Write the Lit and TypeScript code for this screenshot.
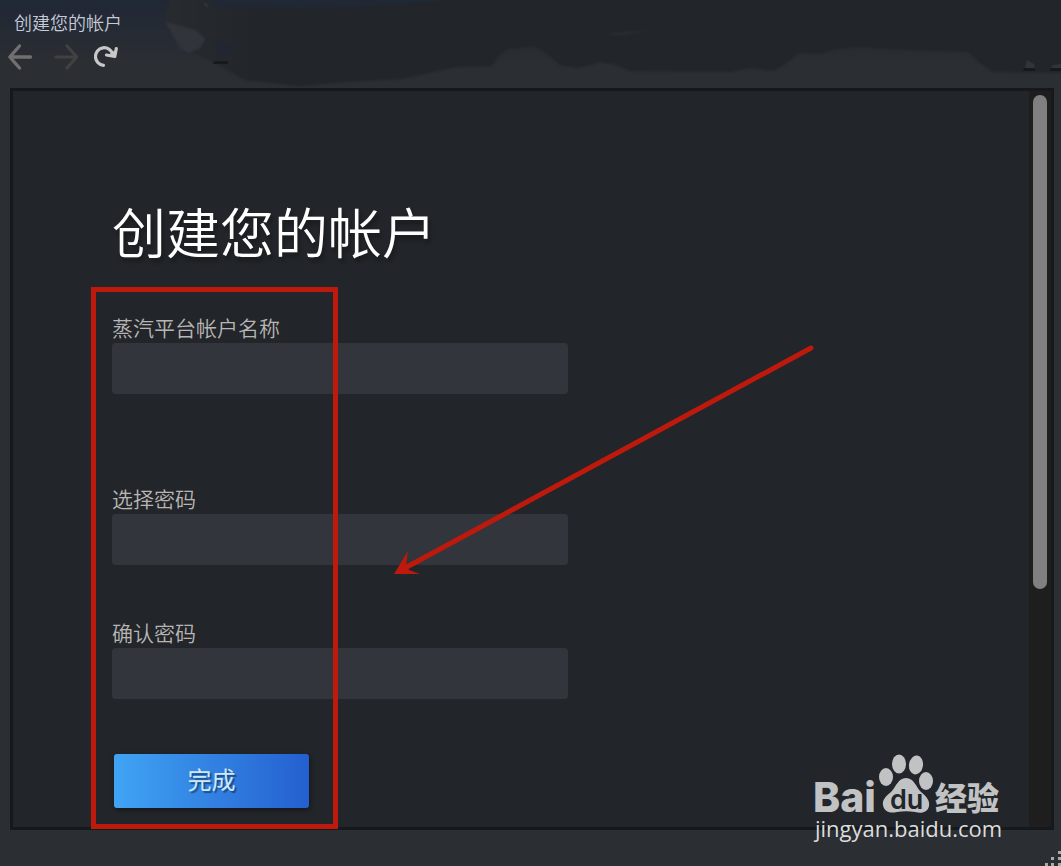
import { LitElement, html, css, svg } from "lit";
import { customElement, property } from "lit/decorators.js";

@customElement("account-field")
class AccountField extends LitElement {
  @property() label = "";
  @property() type = "text";

  static styles = css`
    :host {
      display: block;
    }
    .label {
      display: block;
      padding-bottom: 4px;
      color: #b8b6b4;
      font-size: 21px;
      font-weight: 350;
      line-height: 24px;
    }
    .input {
      display: block;
      box-sizing: border-box;
      width: 100%;
      height: 51px;
      padding: 0 12px;
      border: 0;
      border-radius: 4px;
      background: #32353c;
      color: #fff;
      font: inherit;
      font-size: 21px;
      outline: none;
    }
  `;

  render() {
    return html`
      <label class="label" for="field">${this.label}</label>
      <input class="input" id="field" type=${this.type} />
    `;
  }
}

@customElement("site-mark")
class SiteMark extends LitElement {
  static styles = css`
    :host {
      display: block;
      color: #c1c2c3;
    }
    .mark {
      display: block;
      width: 194px;
      height: 92px;
    }
    .bai {
      font: 800 41px Inter, sans-serif;
    }
    .du {
      font: 600 27px Inter, sans-serif;
    }
    .name {
      font: 900 32px "Noto Sans CJK SC", sans-serif;
    }
    .url {
      font: 500 22px "Open Sans", sans-serif;
      fill: #dcdddd;
    }
  `;

  render() {
    return html`
      <svg class="mark" viewBox="0 0 194 92" fill="currentColor">
        ${svg`
          <text class="bai" x="1" y="59">Bai</text>
          <ellipse cx="74" cy="24" rx="7" ry="9" />
          <ellipse cx="87" cy="11" rx="7" ry="9.5" />
          <ellipse cx="104" cy="12" rx="7" ry="9.5" transform="rotate(8 104 12)" />
          <ellipse cx="114" cy="28" rx="7" ry="9" />
          <path d="M94 25c8 0 10 9 15 14c6 5 9 9 8 14c-1 6-7 8-14 6c-6-1-12-1-18 0c-8 2-13-1-14-7c-1-5 3-9 8-13c5-5 7-14 15-14Z" />
          <text class="du" x="78" y="56" fill="#222529">du</text>
          <text class="name" x="123" y="57">经验</text>
          <text class="url" x="3" y="84">jingyan.baidu.com</text>
        `}
      </svg>
    `;
  }
}

@customElement("app-root")
class AppRoot extends LitElement {
  static styles = css`
    :host {
      display: flex;
      flex-direction: column;
      box-sizing: border-box;
      min-height: 100vh;
      background: #2b2e32;
      color: #fff;
      font-family: "Noto Sans CJK SC", sans-serif;
    }
    .header {
      position: relative;
      height: 88px;
      background: linear-gradient(#202835, #2b2e32 64px);
    }
    .backdrop {
      position: absolute;
      inset: 0;
      width: 100%;
      height: 100%;
    }
    .bar {
      position: relative;
      display: flex;
      flex-direction: column;
    }
    .title {
      margin: 0;
      padding: 8px 14px 0;
      color: #c6cbdc;
      font-size: 18px;
      font-weight: 350;
      line-height: 28px;
    }
    .tools {
      display: flex;
      gap: 16px;
      padding: 6px;
    }
    .tool {
      display: block;
      width: 28px;
      height: 30px;
      padding: 0;
      border: 0;
      background: none;
      color: #707070;
    }
    .tool.dim {
      color: #414141;
    }
    .tool.lit {
      color: #c8c8c8;
    }
    .glyph {
      display: block;
      width: 28px;
      height: 30px;
    }
    .panel {
      position: relative;
      flex: 1;
      display: flex;
      margin: 0 7px 0 10px;
      border: 3px solid #16191b;
      background: #222529;
    }
    .content {
      flex: 1;
      padding: 108px 99px 0;
    }
    .heading {
      margin: 0 0 52px;
      font-size: 54px;
      font-weight: 350;
      line-height: 64px;
      text-shadow: 2px 4px 4px rgba(0, 0, 0, 0.3);
    }
    .form {
      display: flex;
      flex-direction: column;
      gap: 55px;
      max-width: 456px;
      padding-bottom: 19px;
    }
    .account {
      margin-bottom: 37px;
    }
    .submit {
      align-self: flex-start;
      width: 195px;
      height: 54px;
      margin-left: 2px;
      padding: 0 0 5px;
      border: 0;
      border-radius: 3px;
      background: linear-gradient(90deg, #40a4f4, #245fcf);
      box-shadow: 1px 2px 5px rgba(0, 0, 0, 0.4);
      color: #cde8fb;
      font: inherit;
      font-size: 24px;
      text-shadow: 2px 2px 1px rgba(0, 0, 0, 0.4);
    }
    .track {
      width: 14px;
      padding: 4px 4px 0 4px;
      background: #1e1e1e;
    }
    .thumb {
      height: 68%;
      max-height: 494px;
      border-radius: 7px;
      background: #808080;
    }
    .marker {
      position: absolute;
      left: 78px;
      top: 196px;
      width: 724px;
      height: 542px;
      pointer-events: none;
    }
    .stamp {
      position: absolute;
      right: 45px;
      bottom: -18px;
    }
    .footer {
      display: flex;
      align-items: flex-end;
      justify-content: flex-end;
      height: 37px;
    }
    .grip {
      width: 18px;
      height: 20px;
    }
  `;

  render() {
    return html`
      <header class="header">
        <svg class="backdrop" viewBox="0 0 1061 88" preserveAspectRatio="none" aria-hidden="true">
          <defs>
            <filter id="soft" x="-5%" y="-15%" width="110%" height="130%" color-interpolation-filters="sRGB"><feGaussianBlur stdDeviation="1.3" /></filter>
            <linearGradient id="haze" gradientUnits="userSpaceOnUse" x1="160" y1="0" x2="260" y2="0"><stop stop-color="#282b2f" /><stop offset="1" stop-color="#222529" /></linearGradient>
          </defs>
          <g filter="url(#soft)">
            <path fill="url(#haze)" d="M171-6L165 14L164 24L183 48L214 62L228 70L245 80L300 86L345 82L400 79L420 75L455 67L492 66L499 55L508 49L525 47L537 47L551 57L560 65L578 68L600 62L617 65L630 71L730 72L750 68L773 71L785 64L799 53L820 54L835 49L860 47L910 50L968 52L980 63L993 72L1065 73L1065-6Z" />
            <path fill="#202835" d="M205-6H465L432 3L395 4L360 7L300 8L215 7Z" />
            <path fill="#31343b" d="M165 22L181 26L196 30L205 39L200 48L189 53L180 48Z" />
            <path fill="#202733" d="M212 41L222 42L238 50L230 55L218 52Z" />
            <path fill="#2b2e32" d="M604 34L625 32L650 31L620 35Z" />
          </g>
          <path fill="#171a1d" d="M214 61H228V64H213Z M1024 68H1035V71H1023Z M1051 68H1061V71H1050Z" />
          <path fill="#31353a" d="M1027 60L1034 64L1035 68H1025Z M1053 65L1061 64V68H1051Z M203 3L208 4L207 8Z" />
        </svg>
        <div class="bar">
          <h1 class="title">创建您的帐户</h1>
          <nav class="tools">
            <button class="tool" aria-label="后退">
              <svg class="glyph" viewBox="0 0 28 30" fill="none" stroke="currentColor" stroke-width="3.4" stroke-linecap="round" stroke-linejoin="round"><path d="M24.500 15H4M13.500 4L3.800 15L13.500 26" /></svg>
            </button>
            <button class="tool dim" aria-label="前进">
              <svg class="glyph" viewBox="0 0 28 30" fill="none" stroke="currentColor" stroke-width="3.2" stroke-linecap="round" stroke-linejoin="round"><path d="M6 15H26.500M17 4L26.800 15L17 26" /></svg>
            </button>
            <button class="tool lit" aria-label="刷新">
              <svg class="glyph" viewBox="0 0 28 30" fill="none" stroke="currentColor" stroke-width="3.2" stroke-linecap="round" stroke-linejoin="round"><path d="M9.500 23.300A8.800 8.800 0 1 1 18.700 12" /><path d="M22.300 6.500L20.800 14.500L12.500 13" /><path fill="currentColor" stroke-width="1" d="M21 14L15 13L22 8Z" /></svg>
            </button>
          </nav>
        </div>
      </header>
      <main class="panel">
        <section class="content">
          <h2 class="heading">创建您的帐户</h2>
          <form class="form">
            <account-field class="account" label="蒸汽平台帐户名称"></account-field>
            <account-field label="选择密码" type="password"></account-field>
            <account-field label="确认密码" type="password"></account-field>
            <button class="submit" type="button">完成</button>
          </form>
        </section>
        <div class="track"><div class="thumb"></div></div>
        <svg class="marker" viewBox="0 0 724 542" aria-hidden="true">
          <rect x="2.500" y="2.500" width="242" height="537" fill="none" stroke="#bd190c" stroke-width="5" />
          <path d="M720 61L314 281" stroke="#bd190c" stroke-width="5" stroke-linecap="round" />
          <path fill="#bd190c" d="M303 287L317 264L315 278L318 283L329 287Z" />
        </svg>
        <site-mark class="stamp"></site-mark>
      </main>
      <footer class="footer">
        <svg class="grip" viewBox="0 0 18 20" fill="#aaa" aria-hidden="true">
          <path d="M15 4h3v3h-3zM8 10h3v3h-3zM15 10h3v3h-3zM2 16h3v3h-3zM8 16h3v3h-3zM15 16h3v3h-3z" />
        </svg>
      </footer>
    `;
  }
}
